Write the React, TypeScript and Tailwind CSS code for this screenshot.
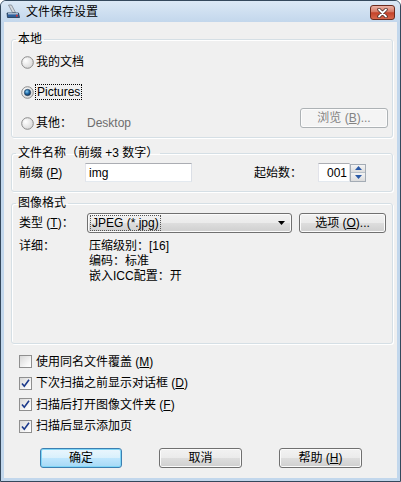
import React, { useId } from 'react';

const Radio = ({ checked }: { checked?: boolean }) => {
  const id = useId().replace(/:/g, '');
  return (
    <svg width="13" height="13" viewBox="0 0 13 13" className="shrink-0">
      <defs>
        <radialGradient id={`rb${id}`} cx="0.35" cy="0.35" r="0.8">
          <stop offset="0" stopColor="#ffffff" />
          <stop offset="1" stopColor="#d2d2d2" />
        </radialGradient>
        <radialGradient id={`rd${id}`} cx="0.4" cy="0.35" r="0.7">
          <stop offset="0" stopColor="#8fd0f3" />
          <stop offset="0.5" stopColor="#1f6aa8" />
          <stop offset="1" stopColor="#0d2a4b" />
        </radialGradient>
      </defs>
      <circle cx="6.5" cy="6.5" r="5.8" fill={`url(#rb${id})`} stroke="#8b8b8b" strokeWidth="1" />
      {checked && <circle cx="6.5" cy="6.5" r="3.2" fill={`url(#rd${id})`} stroke="#2a3d52" strokeWidth="0.6" />}
    </svg>
  );
};

const Check = ({ checked }: { checked?: boolean }) => (
  <div className="w-[13px] h-[13px] shrink-0 border border-[#8f8f8f] bg-[linear-gradient(135deg,#d8d8d8,#f7f7f7_70%,#ffffff)] flex items-center justify-center">
    {checked && (
      <svg width="11" height="11" viewBox="0 0 11 11">
        <path d="M2 5.5 L4.3 8.3 L9 1.8" fill="none" stroke="#1c3a8c" strokeWidth="1.6" />
      </svg>
    )}
  </div>
);

const Btn = ({ children, isDefault, disabled, className = '' }: { children: React.ReactNode; isDefault?: boolean; disabled?: boolean; className?: string }) => {
  let look = 'border-[#707070] bg-[linear-gradient(#f2f2f2,#ebebeb_48%,#dddddd_52%,#cfcfcf)] shadow-[inset_0_0_0_1px_#fbfbfb] text-black';
  if (isDefault) look = 'border-[#3c7fb1] bg-[linear-gradient(#eaf6fd,#d9f0fc_48%,#bee6fd_52%,#a7d9f5)] shadow-[inset_0_0_0_1px_#7fd6f7] text-black';
  if (disabled) look = 'border-[#adb2b5] bg-[#f4f4f4] shadow-[inset_0_0_0_1px_#fcfcfc] text-[#838383]';
  return (
    <div className={`h-[20px] rounded-[3px] border flex items-center justify-center ${look} ${className}`}>
      {children}
    </div>
  );
};

const U = ({ c }: { c: string }) => <span className="underline">{c}</span>;

const inputCls = 'h-[19px] bg-white border border-[#abadb3] border-l-[#e2e3ea] border-r-[#dbdfe6] border-b-[#e3e9ef]';

const Group = ({ title, className = '', children }: { title: string; className?: string; children: React.ReactNode }) => (
  <fieldset className={`ml-[7px] mr-[4px] border border-[#d5dfe5] rounded-[3px] shadow-[inset_1px_1px_0_#ffffff,1px_1px_0_#ffffff] ${className}`}>
    <legend className="ml-[4px] px-[2px] leading-[14px]">{title}</legend>
    {children}
  </fieldset>
);

export default function App() {
  return (
    <div className="w-[401px] h-[482px] flex flex-col bg-[#c2d7ec] border border-[#34485c] rounded-t-[6px] overflow-hidden text-[12px] text-black font-['Liberation_Sans','Noto_Sans_CJK_SC',sans-serif]">
      {/* title bar */}
      <div className="h-[21px] flex items-center pl-[5px] pr-[5px] bg-[linear-gradient(#dbe8f5,#c3d7ec)]">
        <svg width="14" height="15" viewBox="0 0 14 15" className="shrink-0">
          <path d="M2.5 1 L5.5 1 L9.5 8.5 L6.5 8.5 Z" fill="#d4d8dc" stroke="#7c8590" strokeWidth="0.8" />
          <path d="M1 9 L12.5 9 L13.5 13.5 L1.5 13.5 Z" fill="#2f5f9a" stroke="#1d3550" strokeWidth="0.8" />
          <path d="M2 9.8 L12 9.8" stroke="#dfe9f4" strokeWidth="1" />
          <circle cx="10.8" cy="11.7" r="1" fill="#e0302a" />
        </svg>
        <span className="ml-[6px] leading-[14px]">文件保存设置</span>
        <div className="ml-auto mt-[2px] w-[25px] h-[15px] rounded-[3px] border border-[#6b2a1d] bg-[linear-gradient(#eab3a6,#d77965_45%,#c4432a_52%,#d9674b)] flex items-center justify-center">
          <svg width="13" height="10" viewBox="0 0 13 10">
            <path d="M3 1.5 L10 8.5 M10 1.5 L3 8.5" stroke="#4a2a24" strokeWidth="3.4" strokeLinecap="round" />
            <path d="M3 1.5 L10 8.5 M10 1.5 L3 8.5" stroke="#ffffff" strokeWidth="1.8" strokeLinecap="round" />
          </svg>
        </div>
      </div>

      {/* client */}
      <div className="flex-1 mx-[3px] mb-[3px] bg-[#f0f0f0] flex flex-col">
        <Group title="本地" className="mt-[10px]">
          <div className="pl-[9px] pr-[4px] pt-[8px] pb-[6px] flex flex-col">
            <div className="h-[16px] flex items-center gap-[2px]">
              <Radio />
              <span>我的文档</span>
            </div>
            <div className="mt-[14px] h-[16px] flex items-center gap-[2px]">
              <Radio checked />
              <span className="outline outline-1 outline-dotted outline-black px-[1px] leading-[14px]">Pictures</span>
            </div>
            <div className="mt-[8px] flex items-end justify-between">
              <div className="h-[16px] flex items-center gap-[2px]">
                <Radio />
                <span className="w-[49px]">其他：</span>
                <span className="text-[#6d6d6d]">Desktop</span>
              </div>
              <Btn disabled className="w-[88px] mb-[3px]">
                浏览 (<U c="B" />)...
              </Btn>
            </div>
          </div>
        </Group>

        <Group title="文件名称（前缀 +3 数字）" className="mt-[8px]">
          <div className="pl-[7px] pt-[3px] pb-[9px] flex items-center">
            <span className="w-[66px]">
              前缀 (<U c="P" />)
            </span>
            <div className={`${inputCls} w-[107px] flex items-center pl-[3px]`}>img</div>
            <span className="ml-[62px] w-[64px]">起始数：</span>
            <div className={`${inputCls} w-[32px] flex items-center justify-end pr-[2px]`}>001</div>
            <div className="w-[16px] h-[18px] flex flex-col border border-[#a4acb5] bg-white">
              <div className="flex-1 flex items-center justify-center border-b border-[#b8c0c8] bg-[linear-gradient(#f4f4f4,#dcdcdc)]">
                <svg width="7" height="4" viewBox="0 0 7 4"><path d="M0 4 L3.5 0 L7 4 Z" fill="#2b5aa6" /></svg>
              </div>
              <div className="flex-1 flex items-center justify-center bg-[linear-gradient(#f4f4f4,#dcdcdc)]">
                <svg width="7" height="4" viewBox="0 0 7 4"><path d="M0 0 L7 0 L3.5 4 Z" fill="#2b5aa6" /></svg>
              </div>
            </div>
          </div>
        </Group>

        <Group title="图像格式" className="mt-[4px]">
          <div className="pl-[7px] pt-[3px] pb-[59px] flex flex-col">
            <div className="h-[20px] flex items-center">
              <span className="w-[68px]">
                类型 (<U c="T" />)：
              </span>
              <div className="w-[205px] h-[20px] rounded-[3px] border border-[#707070] bg-[linear-gradient(#f2f2f2,#ebebeb_48%,#dddddd_52%,#cfcfcf)] shadow-[inset_0_0_0_1px_#fbfbfb] flex items-center pl-[3px] pr-[6px]">
                <span className="leading-[14px] px-[1px] outline outline-1 outline-dotted outline-[#555]">JPEG (*.jpg)</span>
                <svg width="7" height="4" viewBox="0 0 7 4" className="ml-auto"><path d="M0 0 L7 0 L3.5 4 Z" fill="#000" /></svg>
              </div>
              <Btn className="ml-[7px] w-[87px]">
                选项 (<U c="O" />)...
              </Btn>
            </div>
            <div className="mt-[6px] flex leading-[15px]">
              <span className="w-[70px]">详细：</span>
              <div className="flex flex-col">
                <span>压缩级别：[16]</span>
                <span>编码：标准</span>
                <span>嵌入ICC配置：开</span>
              </div>
            </div>
          </div>
        </Group>

        <div className="mt-[7px] pl-[15px] flex flex-col">
          <div className="h-[21.5px] flex items-center gap-[4px]">
            <Check />
            <span>使用同名文件覆盖 (<U c="M" />)</span>
          </div>
          <div className="h-[21.5px] flex items-center gap-[4px]">
            <Check checked />
            <span>下次扫描之前显示对话框 (<U c="D" />)</span>
          </div>
          <div className="h-[21.5px] flex items-center gap-[4px]">
            <Check checked />
            <span>扫描后打开图像文件夹 (<U c="F" />)</span>
          </div>
          <div className="h-[21.5px] flex items-center gap-[4px]">
            <Check checked />
            <span>扫描后显示添加页</span>
          </div>
        </div>

        <div className="mt-[11px] pl-[36px] flex gap-[37px]">
          <Btn isDefault className="w-[82px]">确定</Btn>
          <Btn className="w-[83px]">取消</Btn>
          <Btn className="w-[83px]">
            帮助 (<U c="H" />)
          </Btn>
        </div>
      </div>
    </div>
  );
}
